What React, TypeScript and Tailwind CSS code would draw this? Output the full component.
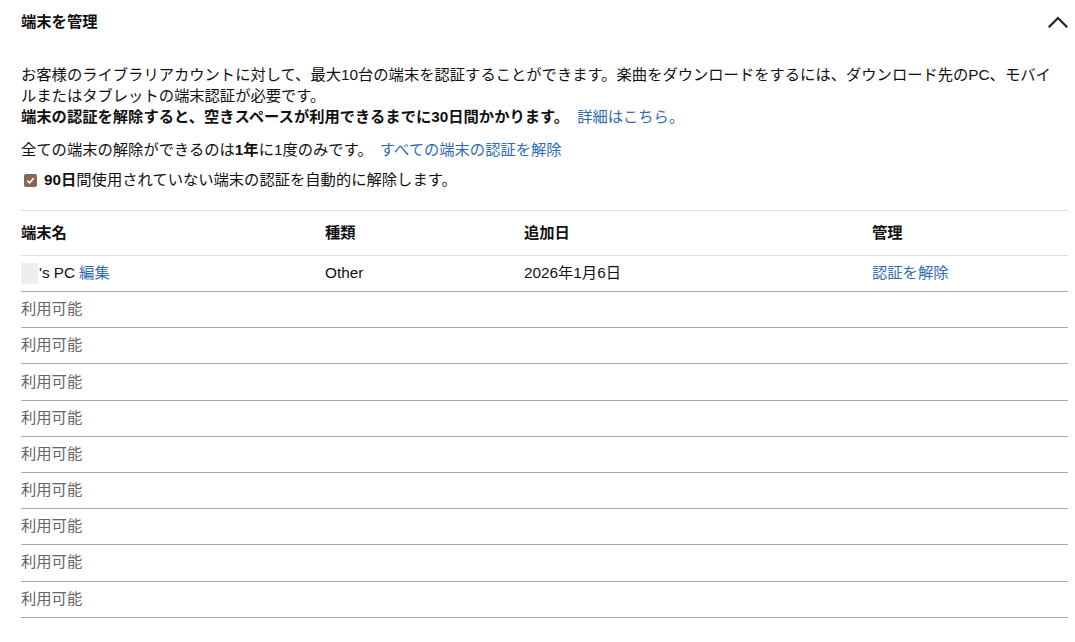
const font = "font-['Liberation_Sans','Noto_Sans_CJK_JP',sans-serif]";

function ChevronUp() {
    return (
        <svg width="20" height="12" viewBox="0 0 20 12" fill="none" className="text-[#222]">
            <path d="M1.5 10.5 L10 2 L18.5 10.5" stroke="currentColor" strokeWidth="2.2" strokeLinecap="square" />
        </svg>
    )
}

function CheckBox() {
    return (
        <span className="flex h-[13px] w-[13px] items-center justify-center rounded-[2px] bg-[#8c6553]">
            <svg width="9" height="9" viewBox="0 0 9 9" fill="none">
                <path d="M1.3 4.6 L3.6 6.8 L7.8 2" stroke="white" strokeWidth="1.6" />
            </svg>
        </span>
    )
}

export default function App() {
    const slots = Array.from({ length: 9 })
    return (
        <div className={`${font} bg-white pl-[21px] pr-[7px] text-[15.3px] text-[#111]`}>
            <div className="flex h-[44px] items-center justify-between">
                <h1 className="font-bold">端末を管理</h1>
                <ChevronUp />
            </div>

            <p className="mt-[20px] w-[1036px] leading-[21px]">
                お客様のライブラリアカウントに対して、最大10台の端末を認証することができます。楽曲をダウンロードをするには、ダウンロード先のPC、モバイルまたはタブレットの端末認証が必要です。
                <br />
                <span className="font-bold">端末の認証を解除すると、空きスペースが利用できるまでに30日間かかります。</span>
                <a className="ml-[8px] text-[#2e6bb3]">詳細はこちら。</a>
            </p>

            <p className="mt-[12px] leading-[21px]">
                全ての端末の解除ができるのは<span className="font-bold">1年</span>に1度のみです。
                <a className="ml-[7px] text-[#2e6bb3]">すべての端末の認証を解除</a>
            </p>

            <label className="mt-[10px] flex h-[21px] items-center gap-[7px] pl-[3px]">
                <CheckBox />
                <span>
                    <span className="font-bold">90日</span>間使用されていない端末の認証を自動的に解除します。
                </span>
            </label>

            <div className="mt-[19px] border-t border-[#dddddd]">
                <div className="grid h-[45px] grid-cols-[304px_199px_348px_1fr] items-center border-b border-[#dddddd] font-bold">
                    <div>端末名</div>
                    <div>種類</div>
                    <div>追加日</div>
                    <div>管理</div>
                </div>
                <div className="grid h-[36px] grid-cols-[304px_199px_348px_1fr] items-center border-b border-[#a9a9a9]">
                    <div className="flex items-center">
                        <span className="mr-[1px] h-[21px] w-[17px] bg-[#eeeeee]" />
                        <span>'s PC</span>
                        <a className="ml-[4px] text-[#2e6bb3]">編集</a>
                    </div>
                    <div>Other</div>
                    <div>2026年1月6日</div>
                    <div>
                        <a className="text-[#2e6bb3]">認証を解除</a>
                    </div>
                </div>
                {slots.map((_, i) => (
                    <div key={i} className="flex h-[36.2px] items-center border-b border-[#a9a9a9] text-[#666]">
                        利用可能
                    </div>
                ))}
            </div>
            <div className="h-[24px]" />
        </div>
    )
}
